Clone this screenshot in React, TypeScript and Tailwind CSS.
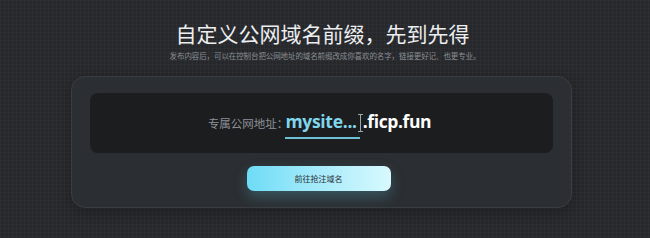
export default function App() {
  return (
    <div
      className="w-[650px] h-[238px] overflow-hidden bg-[#26282b] flex flex-col items-center"
      style={{
        fontFamily: '"Noto Sans CJK SC", "Noto Sans", sans-serif',
        backgroundImage:
          "linear-gradient(rgba(255,255,255,0.025) 1px, transparent 1px), linear-gradient(90deg, rgba(255,255,255,0.025) 1px, transparent 1px)",
        backgroundSize: "4px 4px",
      }}
    >
      <h1 className="mt-[18px] ml-[-5px] text-[21px] leading-[30px] text-[#eceef0]">
        自定义公网域名前缀，先到先得
      </h1>
      <p className="mt-[2px] text-[7.5px] leading-[12px] text-[#8a8f96] tracking-[-0.1px]">
        发布内容后，可以在控制台把公网地址的域名前缀改成你喜欢的名字，链接更好记、也更专业。
      </p>
      <div className="mt-[14px] mr-[7px] w-[501px] h-[132px] rounded-[14px] border border-[#3a3d42] bg-[#2b2e32] flex flex-col items-center pt-[16px] shadow-[0_4px_14px_rgba(0,0,0,0.25)]">
        <div className="w-[463px] h-[60px] rounded-[8px] bg-[#1c1d1f] flex items-center justify-center pr-[4px]">
          <span className="text-[11.5px] text-[#8d9197] mr-[-3px] mt-[2px]">专属公网地址：</span>
          <span className="relative flex items-center">
            <span
              className="text-[17.5px] font-bold text-[#80d6ec] leading-[26px] pb-[3px] border-b-2 border-[#6cbfd4] pr-[3px] tracking-[-0.3px]"
              style={{ fontFamily: '"Open Sans", "Noto Sans", sans-serif' }}
            >
              mysite...
            </span>
            <span className="w-[3px] h-[18px] border-l border-[#9aa] relative">
              <span className="absolute -left-[3px] top-0 w-[5px] h-px bg-[#9aa]" />
              <span className="absolute -left-[3px] bottom-0 w-[5px] h-px bg-[#9aa]" />
            </span>
            <span
              className="text-[17.5px] font-bold text-white leading-[26px] pb-[5px] tracking-[-0.4px]"
              style={{ fontFamily: '"Open Sans", "Noto Sans", sans-serif' }}
            >
              .ficp.fun
            </span>
          </span>
        </div>
        <button className="mt-[13px] mr-[6px] w-[144px] h-[25px] rounded-[7px] bg-gradient-to-r from-[#6cdcf6] to-[#d8f9fe] text-[8px] text-[#2a2e33] shadow-[0_6px_14px_rgba(100,210,235,0.25)]">
          前往抢注域名
        </button>
      </div>
    </div>
  );
}
